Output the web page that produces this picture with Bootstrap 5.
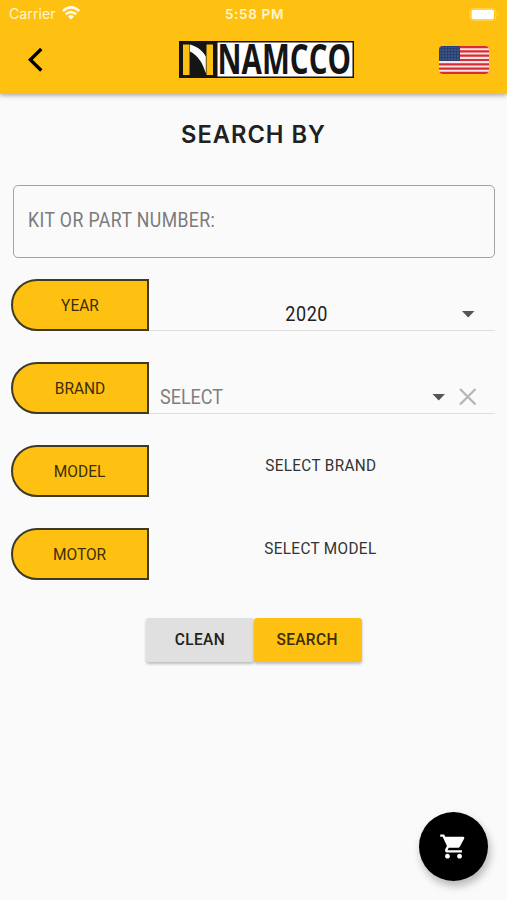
<!DOCTYPE html>
<html lang="en">
<head>
<meta charset="utf-8">
<meta name="viewport" content="width=device-width, initial-scale=1">
<title>Namcco - Search by</title>
<link href="https://cdn.jsdelivr.net/npm/bootstrap@5.3.0/dist/css/bootstrap.min.css" rel="stylesheet">
<style>
  body { height: 900px; overflow: hidden; background: #fafafa; color: #212121; font-family: Roboto, "Liberation Sans", sans-serif; }
  svg { display: block; }
  .topbar { height: 94px; background: #ffc111; box-shadow: 0 1px 5px rgba(0,0,0,.38); }
  .status { height: 28px; padding: 0 7px 0 9px; color: #fff5d0; font: 600 13.6px/28px Inter, sans-serif; }
  .status > * { flex: 1 1 0; }
  .clock { letter-spacing: .6px; }
  .carrier { font-weight: 400; font-size: 14.2px; }
  .wifi { margin: -2px 0 0 6px; }
  .appbar { height: 64px; padding: 0 18px 0 23px; }
  .brandmark { margin-left: 20px; overflow: visible; }
  .heading { margin: 25px 0 0; font: 600 23.7px/32px Inter, sans-serif; letter-spacing: 1px; }
  .content { padding: 0 12px; }
  .kit { height: 73px; margin: 34px 0 21px 1px; padding: 0 0 1px 14px; border: 1px solid #a3a3a3; border-radius: 5px; color: #7b7b7b; font-size: 19.6px; letter-spacing: .47px; }
  .narrow { display: inline-block; white-space: nowrap; transform: scaleX(.9); }
  .from-left { transform-origin: left center; }
  .rows { gap: 31px; }
  .pill { width: 138px; height: 52px; padding-top: 1px; margin-left: -1px; border: 2px solid #3f3a26; border-radius: 26px 0 0 26px; background: #ffc111; color: #3b2e08; font-size: 17.2px; }
  .field { height: 52px; }
  .lined { border-bottom: 1px solid #e0e0e0; padding: 18px 17px 0 11px; font-size: 20px; }
  .year { padding-right: 5px; letter-spacing: .6px; }
  .hint { color: #7f7f7f; }
  .note { height: 41px; padding-right: 3px; font-size: 17px; letter-spacing: .4px; color: #333; }
  .actions { margin-top: 38px; }
  .action { width: 108px; height: 44px; padding: 0; border: 0; border-radius: 3px; font-size: 17.2px; font-weight: 500; letter-spacing: .4px; color: #212121; background: #e0e0e0; box-shadow: 0 2px 3px rgba(0,0,0,.25); }
  .action.go { background: #ffc111; color: #3b2e08; }
  .cart { right: 19px; bottom: 19px; width: 69px; height: 69px; background: #000; box-shadow: 2px 5px 9px rgba(0,0,0,.28); }
</style>
<script src="https://cdn.jsdelivr.net/npm/bootstrap@5.3.0/dist/js/bootstrap.bundle.min.js"></script>
</head>
<body>
<header class="topbar">
  <div class="status d-flex align-items-center">
    <div class="d-flex align-items-center"><span class="carrier">Carrier</span>
      <svg class="wifi" width="18" height="14" viewBox="0 0 18 14" fill="none" stroke="#fffbea" stroke-width="2.500"><path d="M.8 5.100Q9-2.300 17.200 5.100M3.700 8.400Q9 3.800 14.300 8.400"/><path d="M9 13.500 5.900 10.400Q9 7.800 12.100 10.400Z" fill="#fffbea" stroke="none"/></svg>
    </div>
    <div class="clock text-center">5:58 PM</div>
    <div class="d-flex justify-content-end">
      <svg width="31" height="13" viewBox="0 0 31 13"><rect x=".7" y=".7" width="26" height="11.6" rx="3.5" fill="none" stroke="#ffd04a" stroke-width="1.3"/><rect x="2.500" y="1.700" width="22.500" height="9.500" rx="2" fill="#fff"/><path d="M28.300 4.300q2 2.200 0 4.400z" fill="#ffd766"/></svg>
    </div>
  </div>
  <div class="appbar d-flex align-items-center justify-content-between">
    <svg width="50" height="30" viewBox="0 0 50 30" fill="none" stroke="#000" stroke-width="3.3"><path d="M18.300 4 7.300 14.700l11 10.800"/></svg>
    <svg class="brandmark" width="175" height="62" viewBox="0 -12 175 62" role="img" aria-label="Namcco">
      <path fill="#151515" d="M0 0h175v37H0z"/><path fill="#fff" d="M38.500 1.500h135v34h-135z"/>
      <path fill="#ffc111" d="M4 3.500h6.500v30.500H4zM27.500 3.500h6.500v30.500h-6.500z"/>
      <path fill="#fff" d="M11 3.500c8 2 14 8 15.800 12v17C24 22 18.500 14 11 10.500z"/>
      <text x="38.500" y="33.300" textLength="133.500" lengthAdjust="spacingAndGlyphs" font-family="Open Sans, sans-serif" font-weight="700" font-size="40.500" fill="#151515">NAMCCO</text>
    </svg>
    <svg width="50" height="28" viewBox="0 0 50 28"><defs><clipPath id="f"><rect width="50" height="28" rx="4"/></clipPath><pattern id="s" width="3" height="3" patternUnits="userSpaceOnUse"><circle cx="1" cy="1" r=".55" fill="#8192ae"/></pattern></defs>
      <g clip-path="url(#f)"><path fill="#f9e3e3" d="M0 0h50v28H0z"/><path stroke="#d72d35" stroke-width="2.15" d="M0 1.080h50M0 5.380h50M0 9.690h50M0 14h50M0 18.300h50M0 22.600h50M0 26.900h50"/><path fill="#294273" d="M0 0h21v15H0z"/><path fill="url(#s)" d="M1 1h19v13H1z"/></g></svg>
  </div>
</header>
<main class="content">
  <h1 class="heading text-center">SEARCH BY</h1>
  <div class="kit d-flex align-items-center"><span class="narrow from-left">KIT OR PART NUMBER:</span></div>
  <div class="rows d-flex flex-column">
    <div class="d-flex"><div class="pill d-flex align-items-center justify-content-center"><span class="narrow">YEAR</span></div>
      <div class="field lined flex-fill d-flex align-items-center"><span class="year flex-fill text-center"><span class="narrow">2020</span></span>
        <svg width="20" height="18" viewBox="0 0 20 18"><path fill="#555" d="M4 6h12.500L10.200 12.500z"/></svg></div></div>
    <div class="d-flex"><div class="pill d-flex align-items-center justify-content-center"><span class="narrow">BRAND</span></div>
      <div class="field lined flex-fill d-flex align-items-center"><span class="flex-fill hint"><span class="narrow from-left">SELECT</span></span>
        <svg width="50" height="20" viewBox="0 0 50 20"><path fill="#555" d="M4.500 7h12.500L10.700 13.500z"/><path fill="none" stroke="#b5b5b5" stroke-width="2.200" d="m32 2 15.500 15.500m0-15.500L32 17.500"/></svg></div></div>
    <div class="d-flex"><div class="pill d-flex align-items-center justify-content-center"><span class="narrow">MODEL</span></div>
      <div class="field flex-fill"><div class="note d-flex align-items-center justify-content-center"><span class="narrow">SELECT BRAND</span></div></div></div>
    <div class="d-flex"><div class="pill d-flex align-items-center justify-content-center"><span class="narrow">MOTOR</span></div>
      <div class="field flex-fill"><div class="note d-flex align-items-center justify-content-center"><span class="narrow">SELECT MODEL</span></div></div></div>
  </div>
  <div class="actions d-flex justify-content-center">
    <button class="action" type="button"><span class="narrow">CLEAN</span></button><button class="action go" type="button"><span class="narrow">SEARCH</span></button>
  </div>
</main>
<button class="cart position-fixed rounded-circle border-0 d-flex align-items-center justify-content-center p-0" type="button" aria-label="Cart">
  <svg width="29" height="29" viewBox="0 0 24 24" fill="#fff"><path d="M7 18c-1.100 0-1.990.9-1.990 2S5.900 22 7 22s2-.9 2-2-.9-2-2-2zM1 2v2h2l3.600 7.590-1.350 2.450c-.16.280-.25.610-.25.960 0 1.100.9 2 2 2h12v-2H7.420c-.14 0-.25-.11-.25-.25l.03-.12.9-1.630h7.450c.75 0 1.410-.41 1.750-1.030l3.580-6.490A1 1 0 0 0 20 4H5.210l-.94-2H1zm16 16c-1.100 0-1.990.9-1.990 2s.89 2 1.990 2 2-.9 2-2-.9-2-2-2z"/></svg>
</button>
</body>
</html>
